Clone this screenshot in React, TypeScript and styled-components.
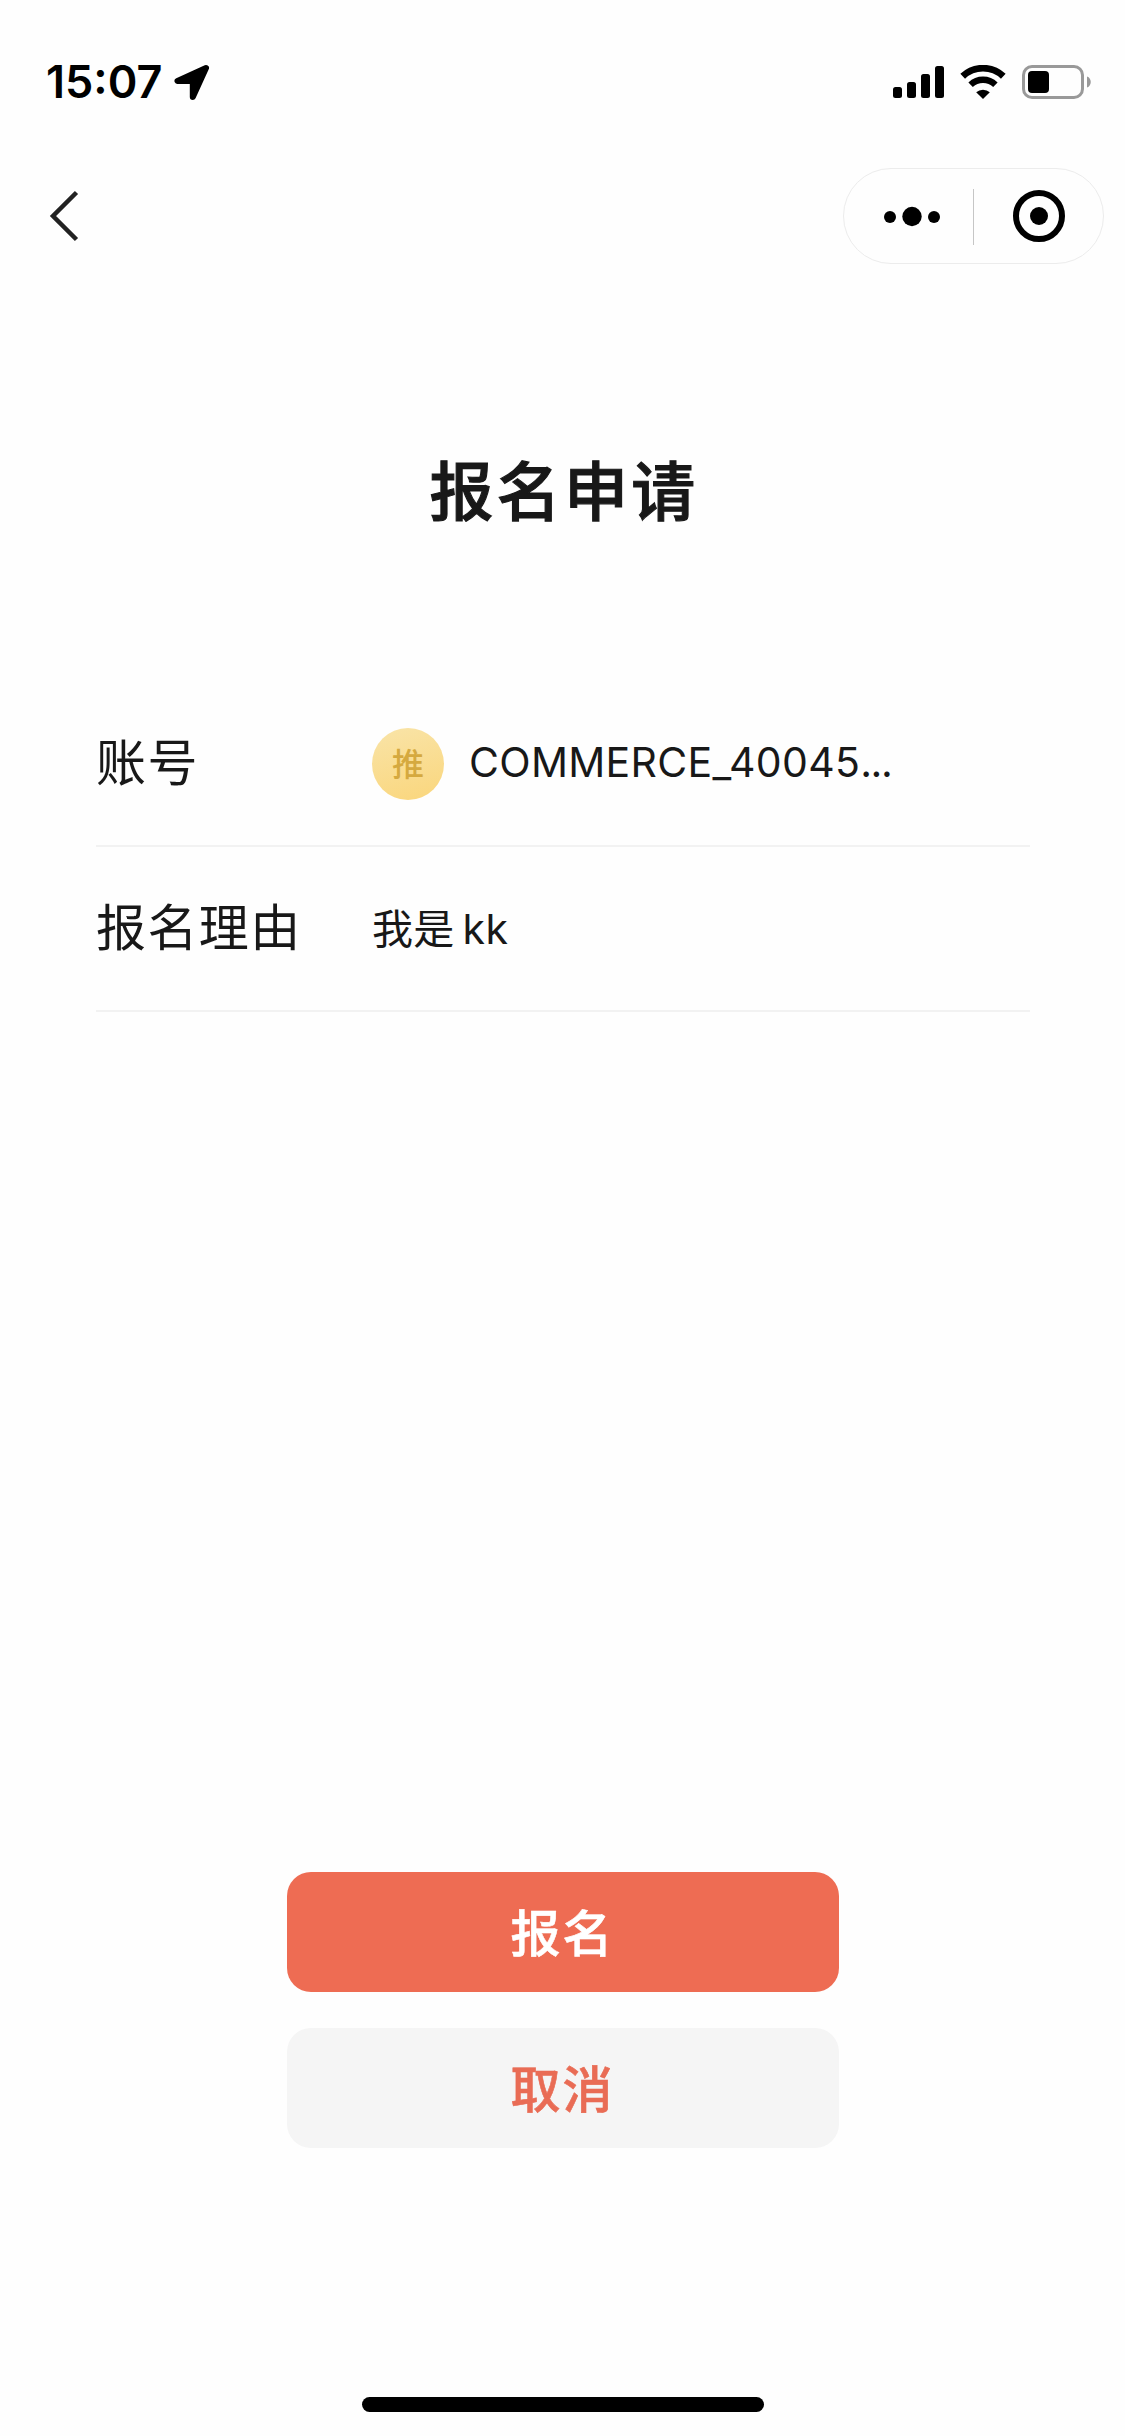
import React, { FC, ReactNode } from 'react';
import styled, { createGlobalStyle } from 'styled-components';

const GlobalStyle = createGlobalStyle`
    * {
        box-sizing: border-box;
    }
    body {
        margin: 0;
        background: #fefefe;
        color: #181818;
        font-family: Inter, 'Noto Sans CJK SC', sans-serif;
    }
`;

const PageStyled = styled.div`
    display: flex;
    flex-direction: column;
    width: 1125px;
    height: 2436px;
    overflow: hidden;
`;

const StatusBarStyled = styled.header`
    display: flex;
    align-items: center;
    justify-content: space-between;
    height: 132px;
    padding: 32px 33px 0 46px;
`;

const StatusGroupStyled = styled.div<{ $gap: number }>`
    display: flex;
    align-items: center;
    gap: ${({ $gap }) => $gap}px;
`;

const TimeStyled = styled.span`
    font-size: 45px;
    line-height: 50px;
    font-weight: 600;
    color: #000;
`;

const NavBarStyled = styled.nav`
    display: flex;
    align-items: center;
    justify-content: space-between;
    height: 168px;
    padding: 0 21px 0 46px;
`;

const IconButtonStyled = styled.button`
    display: flex;
    align-items: center;
    justify-content: center;
    padding: 0;
    border: none;
    background: transparent;
`;

const CapsuleStyled = styled.div`
    display: flex;
    align-items: center;
    width: 261px;
    height: 96px;
    border: 1px solid #ececec;
    border-radius: 48px;
`;

const CapsuleButtonStyled = styled(IconButtonStyled)<{ $indent?: number }>`
    width: 129px;
    height: 100%;
    padding-left: ${({ $indent = 0 }) => $indent}px;
`;

const CapsuleDividerStyled = styled.div`
    width: 1px;
    height: 56px;
    margin-top: 2px;
    background: #c6c6c6;
`;

const TitleStyled = styled.h1`
    margin: 144px 0 0;
    padding-left: 3px;
    font-size: 64px;
    line-height: 96px;
    font-weight: 500;
    letter-spacing: 3.3px;
    text-align: center;
    -webkit-text-stroke: 1.1px currentColor;
`;

const FormStyled = styled.form`
    display: flex;
    flex: 1;
    flex-direction: column;
    padding-top: 142px;
`;

const RowStyled = styled.div`
    display: flex;
    align-items: center;
    height: 165px;
    margin: 0 95px 0 96px;
    border-bottom: 2px solid #f2f2f2;
`;

const LabelStyled = styled.label`
    width: 276px;
    padding-bottom: 2px;
    font-size: 50px;
    line-height: 72px;
    letter-spacing: 1.4px;
`;

const ValueStyled = styled.div<{ $gap: number }>`
    display: flex;
    align-items: center;
    gap: ${({ $gap }) => $gap}px;
    font-size: 41px;
    line-height: 60px;
    letter-spacing: 0.3px;
`;

const AccountNameStyled = styled.span`
    padding-bottom: 3px;
`;

const EllipsisStyled = styled.span`
    letter-spacing: -1.4px;
`;

const AvatarStyled = styled.div`
    display: flex;
    align-items: center;
    justify-content: center;
    width: 72px;
    height: 72px;
    padding-top: 2px;
    border-radius: 50%;
    background: linear-gradient(165deg, #f9e4a8, #fad67c);
    color: #d5a93f;
    font-size: 32px;
    line-height: 46px;
    font-weight: 500;
    letter-spacing: 0;
`;

const ActionsStyled = styled.div`
    display: flex;
    flex-direction: column;
    align-items: center;
    gap: 36px;
    margin-top: auto;
`;

const ActionButtonStyled = styled.button<{ $primary?: boolean }>`
    width: 552px;
    height: 120px;
    padding: 3px 0 0;
    border: none;
    border-radius: 24px;
    background: ${({ $primary }) => $primary ? '#ee6c53' : '#f5f5f5'};
    color: ${({ $primary }) => $primary ? '#fff' : '#e96c55'};
    font-family: inherit;
    font-size: 50px;
    line-height: 72px;
    font-weight: 500;
    letter-spacing: 2px;
    -webkit-text-stroke: 0.6px currentColor;
`;

const HomeAreaStyled = styled.footer`
    display: flex;
    align-items: flex-end;
    justify-content: center;
    height: 288px;
    padding-bottom: 24px;
`;

const HomeIndicatorStyled = styled.div`
    width: 402px;
    height: 15px;
    border-radius: 8px;
    background: #000;
`;

const LocationIcon = () => (
    <svg width="36" height="36" viewBox="0 0 36 36">
        <path
            d="M32 4 3.5 17H18.8V33Z"
            fill="#000"
            stroke="#000"
            strokeWidth="6"
            strokeLinejoin="round" />
    </svg>
);

const SignalIcon = () => (
    <svg width="51" height="34" viewBox="0 0 51 34">
        <rect x="0" y="22" width="9" height="11" rx="2.5" />
        <rect x="14" y="17" width="9" height="16" rx="2.5" />
        <rect x="28" y="9" width="9" height="24" rx="2.5" />
        <rect x="42" y="1" width="9" height="32" rx="2.5" />
    </svg>
);

const WifiIcon = () => (
    <svg width="46" height="34" viewBox="0 0 46 34">
        <path d="M2.7 11.3A29.5 29.5 0 0 1 43.3 11.3" fill="none" stroke="#000" strokeWidth="6.8" />
        <path d="M10.6 19.7A18 18 0 0 1 35.4 19.7" fill="none" stroke="#000" strokeWidth="6.4" />
        <path d="M23 34 16.2 27.3A10 10 0 0 1 29.8 27.3Z" />
    </svg>
);

const BatteryIcon = () => (
    <svg width="70" height="34" viewBox="0 0 70 34">
        <rect x="1.5" y="1.5" width="59" height="31" rx="8.5" fill="none" stroke="#999" strokeWidth="3" />
        <rect x="6" y="6" width="21" height="22" rx="4" />
        <path d="M65 11.5C70 13 70 21 65 22.5Z" fill="#999" />
    </svg>
);

const BackIcon = () => (
    <svg width="34" height="56" viewBox="0 0 34 56">
        <path d="M30.5 4.5 7 28 30.5 51.5" fill="none" stroke="#222" strokeWidth="4.5" />
    </svg>
);

const MoreIcon = () => (
    <svg width="60" height="24" viewBox="0 0 60 24">
        <circle cx="8" cy="13" r="6" />
        <circle cx="30" cy="12.5" r="9.7" />
        <circle cx="52" cy="13" r="6" />
    </svg>
);

const CloseIcon = () => (
    <svg width="54" height="54" viewBox="0 0 54 54">
        <circle cx="27" cy="27" r="23" fill="none" stroke="#000" strokeWidth="6" />
        <circle cx="27" cy="27" r="9" />
    </svg>
);

interface FormRowProps {
    label: string;
    gap: number;
    children: ReactNode;
}

const FormRow: FC<FormRowProps> = ({ label, gap, children }) => (
    <RowStyled>
        <LabelStyled>{label}</LabelStyled>
        <ValueStyled $gap={gap}>{children}</ValueStyled>
    </RowStyled>
);

const App: FC = () => (
    <>
        <GlobalStyle />
        <PageStyled>
            <StatusBarStyled>
                <StatusGroupStyled $gap={12}>
                    <TimeStyled>15:07</TimeStyled>
                    <LocationIcon />
                </StatusGroupStyled>
                <StatusGroupStyled $gap={16}>
                    <SignalIcon />
                    <WifiIcon />
                    <BatteryIcon />
                </StatusGroupStyled>
            </StatusBarStyled>

            <NavBarStyled>
                <IconButtonStyled aria-label="Back">
                    <BackIcon />
                </IconButtonStyled>
                <CapsuleStyled>
                    <CapsuleButtonStyled aria-label="More" $indent={6}>
                        <MoreIcon />
                    </CapsuleButtonStyled>
                    <CapsuleDividerStyled />
                    <CapsuleButtonStyled aria-label="Close">
                        <CloseIcon />
                    </CapsuleButtonStyled>
                </CapsuleStyled>
            </NavBarStyled>

            <TitleStyled>报名申请</TitleStyled>

            <FormStyled>
                <FormRow label="账号" gap={25}>
                    <AvatarStyled>推</AvatarStyled>
                    <AccountNameStyled>
                        COMMERCE_40045<EllipsisStyled>...</EllipsisStyled>
                    </AccountNameStyled>
                </FormRow>
                <FormRow label="报名理由" gap={8}>
                    <span>我是</span>
                    <span>kk</span>
                </FormRow>

                <ActionsStyled>
                    <ActionButtonStyled type="button" $primary>报名</ActionButtonStyled>
                    <ActionButtonStyled type="button">取消</ActionButtonStyled>
                </ActionsStyled>
            </FormStyled>

            <HomeAreaStyled>
                <HomeIndicatorStyled />
            </HomeAreaStyled>
        </PageStyled>
    </>
);

export default App;
